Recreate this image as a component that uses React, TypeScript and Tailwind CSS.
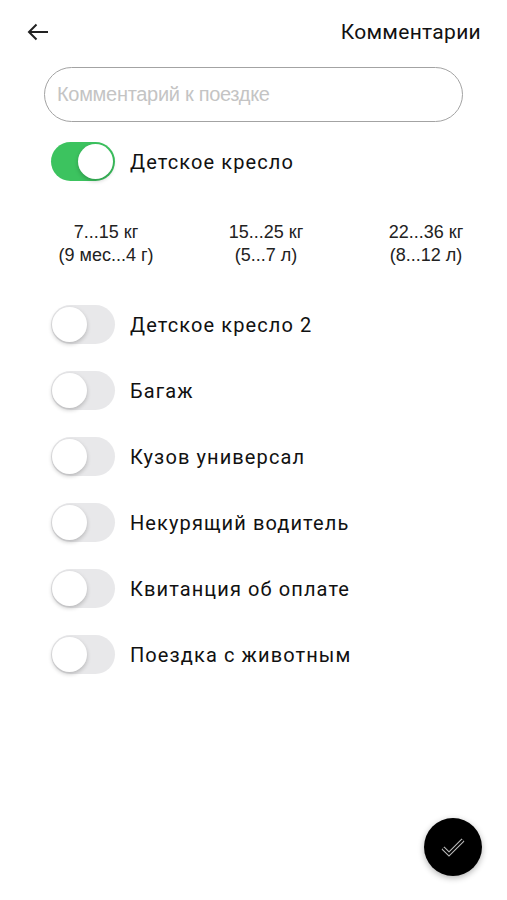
import React, { useState } from "react";

function Toggle({ on }: { on: boolean }) {
  return (
    <div
      className={
        "relative h-[39px] w-[64px] shrink-0 rounded-full " +
        (on ? "bg-[#3cc35f]" : "bg-[#e8e8ea]")
      }
    >
      <div
        className={
          "absolute top-[2px] h-[35px] w-[35px] rounded-full bg-white shadow-[0_2px_4px_rgba(0,0,0,0.22)] " +
          (on ? "right-[2px]" : "left-[1px]")
        }
      />
    </div>
  );
}

const options = [
  "Детское кресло 2",
  "Багаж",
  "Кузов универсал",
  "Некурящий водитель",
  "Квитанция об оплате",
  "Поездка с животным",
];

const sizes = [
  ["7...15 кг", "(9 мес...4 г)"],
  ["15...25 кг", "(5...7 л)"],
  ["22...36 кг", "(8...12 л)"],
];

export default function App() {
  const [text, setText] = useState("");
  return (
    <div className="relative h-[900px] w-[507px] overflow-hidden bg-white font-['Roboto',sans-serif] text-[#111]">
      <div className="flex h-[62px] items-center justify-between pl-[27px] pr-[26px] pt-[2px]">
        <svg width="22" height="18" viewBox="0 0 22 18" fill="none">
          <path d="M21 9H2M9.5 1.5L2 9l7.5 7.5" stroke="#222" strokeWidth="2" />
        </svg>
        <div className="text-[21px] tracking-[0.3px] leading-none">Комментарии</div>
      </div>
      <div className="px-[44px] pt-[5px]">
        <input
          value={text}
          onChange={(e) => setText(e.target.value)}
          placeholder="Комментарий к поездке"
          className="h-[55px] w-full rounded-full border-[1.5px] border-[#a3a3a3] px-[12px] font-['Liberation_Sans',sans-serif] text-[20px] tracking-[-0.3px] outline-none placeholder:text-[#c4c4c4]"
        />
      </div>
      <div className="mt-[20px] flex items-center gap-[15px] pl-[51px]">
        <Toggle on={true} />
        <span className="text-[20px] tracking-[1.1px] leading-none">Детское кресло</span>
      </div>
      <div className="mt-[40px] grid w-[506px] grid-cols-3 pl-[26px] font-['Liberation_Sans',sans-serif] text-[18px] leading-[23px] text-[#222]">
        {sizes.map(([a, b]) => (
          <div key={a} className="flex flex-col items-center">
            <span>{a}</span>
            <span>{b}</span>
          </div>
        ))}
      </div>
      <div className="mt-[38px] flex flex-col gap-[27px] pl-[51px]">
        {options.map((o) => (
          <div key={o} className="flex items-center gap-[15px]">
            <Toggle on={false} />
            <span className="text-[20px] tracking-[1.1px] leading-none">{o}</span>
          </div>
        ))}
      </div>
      <button className="absolute left-[424px] top-[818px] flex h-[58px] w-[58px] items-center justify-center rounded-full bg-black shadow-[0_2px_6px_rgba(0,0,0,0.3)]">
        <svg width="24" height="20" viewBox="0 0 24 20" fill="none">
          <path
            d="M2 11l6 6L22 3"
            stroke="#bbb"
            strokeWidth="4"
            strokeLinejoin="miter"
          />
          <path d="M2 11l6 6L22 3" stroke="#000" strokeWidth="1.8" />
        </svg>
      </button>
    </div>
  );
}
